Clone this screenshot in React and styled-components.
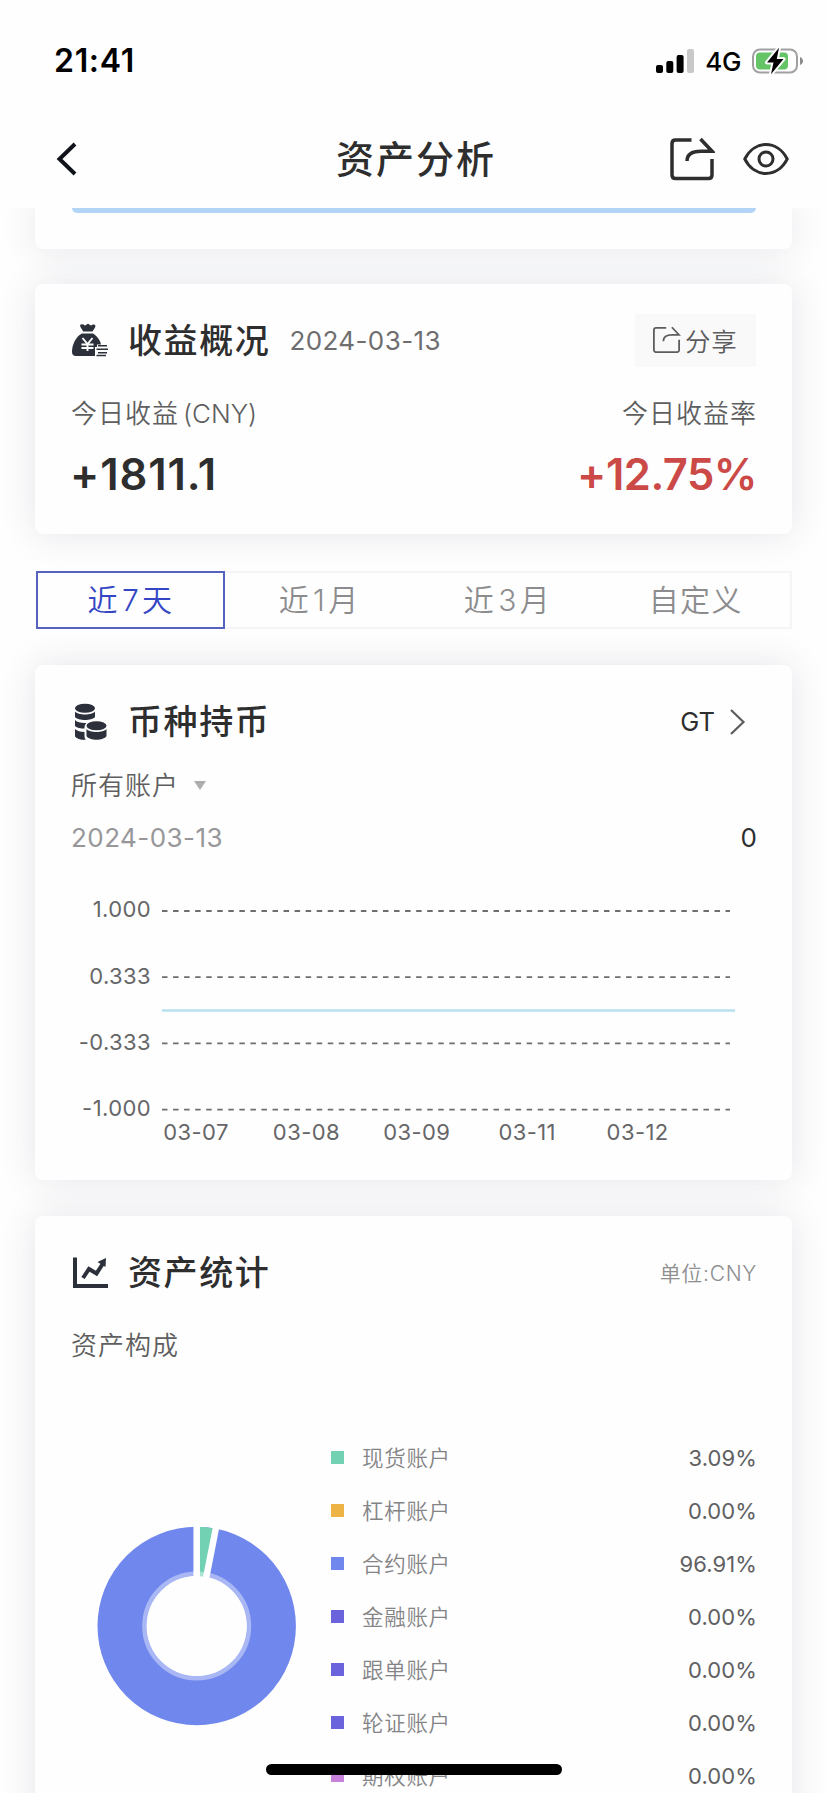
import React from "react";
import styled, { createGlobalStyle } from "styled-components";

const GlobalStyle = createGlobalStyle`
  * {
    box-sizing: border-box;
  }
  body {
    margin: 0;
    background: #fefefe;
    font-family: Inter, "Noto Sans CJK SC", sans-serif;
    color: #2e2e2f;
  }
  svg {
    display: block;
    flex-shrink: 0;
  }
`;

const Screen = styled.div`
  position: relative;
  width: 828px;
  height: 1793px;
  display: flex;
  flex-direction: column;
  overflow: hidden;
`;
const Header = styled.header`
  height: 208px;
  flex-shrink: 0;
  background: #fefefe;
`;
const StatusBar = styled.div`
  height: 122px;
  padding: 0 25px 0 54px;
  display: flex;
  align-items: center;
`;
const Clock = styled.span`
  flex: 1;
  margin-bottom: 2px;
  font-size: 32px;
  font-weight: 600;
  letter-spacing: 0.7px;
  color: #000;
`;
const Network = styled.span`
  margin: 1px 11px 0;
  font-size: 26px;
  font-weight: 500;
  letter-spacing: -0.4px;
  color: #000;
`;
const NavBar = styled.nav`
  height: 74px;
  padding: 0 39px 0 56px;
  display: grid;
  grid-template-columns: 103px 1fr 120px;
  align-items: center;
`;
const NavTitle = styled.h1`
  margin: 0;
  padding-left: 4px;
  text-align: center;
  font-size: 38px;
  line-height: 54px;
  font-weight: 500;
  letter-spacing: 2px;
`;
const NavActions = styled.div`
  display: flex;
  justify-content: flex-end;
  align-items: center;
  gap: 28px;
`;
const Content = styled.main`
  flex: 1;
  min-height: 0;
  overflow: hidden;
  padding: 0 36px 0 35px;
`;
const Card = styled.section`
  height: ${(props) => props.$height}px;
  padding: 30px 36px 0 37px;
  margin-bottom: ${(props) => props.$gap || 0}px;
  background: #fefefe;
  border-radius: 8px;
  box-shadow: 0 0 36px rgba(40, 52, 84, 0.12);
`;
const TopCard = styled(Card)`
  padding-top: 0;
  border-radius: 0 0 8px 8px;
`;
const BannerEdge = styled.div`
  height: 5px;
  background: #b2d4f7;
  border-radius: 0 0 5px 5px;
`;
const Row = styled.div`
  display: flex;
  align-items: center;
  justify-content: space-between;
  height: ${(props) => props.$height || 36}px;
  margin-top: ${(props) => props.$top || 0}px;
`;
const TitleGroup = styled.div`
  display: flex;
  align-items: center;
`;
const CardTitle = styled.h2`
  margin: 0 0 0 19px;
  font-size: 34px;
  line-height: 50px;
  font-weight: 500;
  letter-spacing: 1.6px;
`;
const TitleDate = styled.span`
  margin-left: 19px;
  font-size: 26px;
  letter-spacing: 0.4px;
  color: #6e6e70;
`;
const ShareButton = styled.button`
  width: 121px;
  height: 53px;
  padding: 0 0 2px 17px;
  display: flex;
  align-items: center;
  gap: 4px;
  border: 0;
  background: #f9f9fa;
  font: inherit;
  font-size: 25.5px;
  font-weight: 350;
  letter-spacing: 0.8px;
  color: #5c5c5e;
`;
const Label = styled.span`
  font-size: 26px;
  line-height: 36px;
  font-weight: 350;
  letter-spacing: 1px;
  margin: 1px -1px 0;
  color: #5e5e60;
`;
const Latin = styled.span`
  margin-left: 4px;
  letter-spacing: 0;
`;
const Amount = styled.strong`
  margin: 0 -1px 0 -2px;
  font-size: 43.5px;
  line-height: 52px;
  font-weight: 600;
  letter-spacing: ${(props) => (props.$up ? -0.5 : 0.9)}px;
  color: ${(props) => (props.$up ? "#cb4a47" : "#2e2e2f")};
`;
const Tabs = styled.div`
  height: 58px;
  margin: 0 0 36px 1px;
  display: grid;
  grid-template-columns: 187px repeat(3, 1fr);
  border: 2px solid #f5f5f7;
`;
const Tab = styled.button`
  margin: ${(props) => (props.$active ? "-2px 0 -2px -2px" : "0")};
  padding: 0 0 4px;
  border: ${(props) => (props.$active ? "2px solid #5663be" : "0")};
  background: transparent;
  font: inherit;
  font-size: 30px;
  font-weight: 350;
  letter-spacing: 1.4px;
  color: ${(props) => (props.$active ? "#3546c4" : "#8c8c8e")};
`;
const Count = styled.span`
  margin: 0 2px 0 3px;
`;
const CoinPicker = styled.div`
  display: flex;
  align-items: center;
  gap: 14px;
  padding-right: 10px;
  font-size: 25.5px;
`;
const AccountPicker = styled.div`
  display: flex;
  align-items: center;
  gap: 16px;
`;
const Triangle = styled.i`
  border: 6.5px solid transparent;
  border-top: 9px solid #adadaf;
  border-bottom: 0;
`;
const PointDate = styled.span`
  margin: -2px 0 0 -1px;
  font-size: 26px;
  letter-spacing: 0.45px;
  color: #97979a;
`;
const PointValue = styled.span`
  margin: -2px -1px 0 0;
  font-size: 26px;
`;
const ChartText = styled.text`
  font-size: 22px;
  letter-spacing: 0.4px;
  fill: #666668;
`;
const Unit = styled.span`
  margin: -2px -1px 0 0;
  font-size: 21px;
  font-weight: 350;
  letter-spacing: 0.7px;
  color: #8e8e90;
`;
const Composition = styled.div`
  display: flex;
  margin-top: 68px;
`;
const DonutBox = styled.div`
  width: 259px;
  padding: 94.5px 0 0 25px;
`;
const Legend = styled.ul`
  flex: 1;
  margin: 0;
  padding: 0;
  list-style: none;
`;
const LegendItem = styled.li`
  height: 53px;
  display: flex;
  align-items: center;
`;
const Swatch = styled.i`
  width: 13px;
  height: 13px;
  margin-right: 18px;
  background: ${(props) => props.$color};
`;
const LegendName = styled.span`
  flex: 1;
  margin-top: -2px;
  font-size: 21.5px;
  font-weight: 350;
  letter-spacing: 0.7px;
  color: #848486;
`;
const LegendValue = styled.span`
  font-size: 22px;
  letter-spacing: 0.1px;
  margin-right: -1px;
  color: #606062;
`;
const HomeIndicator = styled.div`
  position: absolute;
  left: 266px;
  bottom: 18px;
  width: 296px;
  height: 11px;
  border-radius: 6px;
  background: #000;
`;

const ranges = [
  ["近", "7", "天"],
  ["近", "1", "月"],
  ["近", "3", "月"],
  ["自定义"],
];
const yTicks = ["1.000", "0.333", "-0.333", "-1.000"];
const xTicks = ["03-07", "03-08", "03-09", "03-11", "03-12"];
const accounts = [
  { name: "现货账户", value: "3.09%", color: "#72d0b3" },
  { name: "杠杆账户", value: "0.00%", color: "#edb344" },
  { name: "合约账户", value: "96.91%", color: "#7087ed" },
  { name: "金融账户", value: "0.00%", color: "#6b63dc" },
  { name: "跟单账户", value: "0.00%", color: "#6b63dc" },
  { name: "轮证账户", value: "0.00%", color: "#6b63dc" },
  { name: "期权账户", value: "0.00%", color: "#c882dc" },
];

function SignalIcon() {
  return (
    <svg width="38" height="24" viewBox="0 0 38 24">
      <rect x="0" y="16" width="7" height="8" rx="2" />
      <rect x="10.3" y="12" width="7" height="12" rx="2" />
      <rect x="20.6" y="6" width="7" height="18" rx="2" />
      <rect x="31" y="0" width="7" height="24" rx="2" fill="#c8c8c8" />
    </svg>
  );
}

function BatteryIcon() {
  return (
    <svg width="51" height="28" viewBox="0 0 51 28">
      <rect x="1" y="2.5" width="44" height="23" rx="7" fill="none" stroke="#a0a0a2" strokeWidth="2" />
      <path d="M48 10c4 1.5 4 6.5 0 8z" fill="#8b8b8d" />
      <rect x="4" y="5.5" width="32" height="17" rx="4" fill="#65c466" />
      <path
        d="M27 0.8L15 15.5H21.5L19 27.2L31.5 12H24.8Z"
        stroke="#fefefe"
        strokeWidth="4"
        strokeLinejoin="round"
      />
      <path d="M27 0.8L15 15.5H21.5L19 27.2L31.5 12H24.8Z" />
    </svg>
  );
}

function BackIcon() {
  return (
    <svg width="22" height="34" viewBox="0 0 22 34" fill="none" stroke="#11131a" strokeWidth="4">
      <path d="M19 2L3.5 17L19 32" />
    </svg>
  );
}

function ShareIcon({ width, stroke }) {
  return (
    <svg
      width={width}
      height={(width * 44) / 46}
      viewBox="0 0 46 44"
      fill="none"
      stroke="currentColor"
      strokeWidth={stroke}
    >
      <path d="M22.5 3H6.5Q3 3 3 6.5V38Q3 41.5 6.5 41.5H39.5Q43 41.5 43 38V22" />
      <path d="M31.5 2L43 14.2H32C22.5 14.2 18 17.5 18 24" />
    </svg>
  );
}

function EyeIcon() {
  return (
    <svg width="46" height="32" viewBox="0 0 46 32" fill="none" stroke="#2e2e2f" strokeWidth="3">
      <path d="M1.8 16C11.5-3.3 34.5-3.3 44.2 16C34.5 35.3 11.5 35.3 1.8 16Z" />
      <circle cx="23" cy="16" r="7" />
    </svg>
  );
}

function MoneyBagIcon() {
  return (
    <svg width="37" height="36" viewBox="0 0 37 36" fill="#2b303b">
      <path d="M8 2.5C9.5.5 11.5 1.5 12.5 2.2C14 3 15 .8 16 .8C17 .8 18 3 19.500 2.2C21 1.2 23 1.5 23.5 3C22.8 5.5 21.5 6.5 20.5 8.5H11C10.5 6.5 8.5 5 8 2.5Z" />
      <path d="M10 10.5H21C25 13 28.5 17.5 29 21.5H25V24H23V33H4C1.5 33 0 31.5 0 29C0 21.5 4 13.5 10 10.5Z" />
      <path
        d="M10.5 15L15.5 21L20.5 15M15.5 21V28M9.5 21.5H21.5M9.5 25H21.5"
        fill="none"
        stroke="#fefefe"
        strokeWidth="1.9"
      />
      <path d="M26 22.7H35M24.5 26.2H36M26 29.7H35M24.5 32.5H34" fill="none" stroke="#2b303b" strokeWidth="1.6" />
    </svg>
  );
}

function CoinsIcon() {
  return (
    <svg width="37" height="38" viewBox="0 0 37 38" fill="#2b303b">
      <ellipse cx="13" cy="5.3" rx="10" ry="4.5" />
      <path d="M3 8.5C6 12.5 20 12.5 23 8.5V14C20 18 6 18 3 14Z" />
      <path d="M3 17C5.5 19.5 9 20.2 14.5 20C13 21.5 12.5 22.5 12.5 25.5C8.5 25.5 5 25 3 23Z" />
      <path d="M3 26C5 28 8.5 29 12.5 29V33C12.5 35 13 36 14 36.8C9 37 5 36 3 33.5Z" />
      <ellipse cx="24.5" cy="22.8" rx="10" ry="4.5" />
      <path d="M14.5 26C17.5 30 31.5 30 34.5 26V33C31.5 38 17.5 38 14.5 33Z" />
    </svg>
  );
}

function TrendIcon() {
  return (
    <svg width="37" height="34" viewBox="0 0 37 34" fill="none" stroke="#2b303b">
      <path d="M3 1.5V30H36" strokeWidth="4" />
      <path d="M11 22L17 13L24.5 17.5L31 7.5" strokeWidth="4" />
      <path d="M25.5 6L34 2L33.5 11Z" fill="#2b303b" stroke="none" />
    </svg>
  );
}

function HoldingsChart() {
  return (
    <svg width="684" height="300" viewBox="72 856 684 300">
      {yTicks.map((tick, i) => (
        <g key={tick}>
          <ChartText x="151" y={917.3 + i * 66.2} textAnchor="end">
            {tick}
          </ChartText>
          <line
            x1="162"
            x2="730"
            y1={911 + i * 66.2}
            y2={911 + i * 66.2}
            stroke="#6e6e70"
            strokeWidth="1.8"
            strokeDasharray="5.5 5.55"
          />
        </g>
      ))}
      <line x1="162" x2="735" y1="1010.5" y2="1010.5" stroke="#b9dff1" strokeWidth="2.5" />
      {xTicks.map((tick, i) => (
        <ChartText key={tick} x={196 + i * 110.4} y="1140.3" textAnchor="middle">
          {tick}
        </ChartText>
      ))}
    </svg>
  );
}

function Donut() {
  return (
    <svg width="200" height="200" viewBox="-99.7 -100 200 200">
      <circle r="74.6" fill="none" stroke="#7087ed" strokeWidth="49.2" />
      <path d="M0 0V-99.2A99.2 99.2 0 0 1 19.2 -97.3Z" fill="#72d0b3" />
      <circle r="52.25" fill="none" stroke="#fefefe" strokeOpacity="0.4" strokeWidth="4.5" />
      <circle r="50" fill="#fefefe" />
      <path d="M0 0V-104M0 0L20 -102" stroke="#fefefe" strokeWidth="6.5" />
    </svg>
  );
}

export default function App() {
  return (
    <>
      <GlobalStyle />
      <Screen>
        <Header>
          <StatusBar>
            <Clock>21:41</Clock>
            <SignalIcon />
            <Network>4G</Network>
            <BatteryIcon />
          </StatusBar>
          <NavBar>
            <BackIcon />
            <NavTitle>资产分析</NavTitle>
            <NavActions>
              <ShareIcon width={46} stroke={3.5} />
              <EyeIcon />
            </NavActions>
          </NavBar>
        </Header>
        <Content>
          <TopCard $height={41} $gap={35}>
            <BannerEdge />
          </TopCard>

          <Card $height={250} $gap={37}>
            <Row $height={53}>
              <TitleGroup>
                <MoneyBagIcon />
                <CardTitle>收益概况</CardTitle>
                <TitleDate>2024-03-13</TitleDate>
              </TitleGroup>
              <ShareButton>
                <ShareIcon width={29} stroke={2.8} />
                分享
              </ShareButton>
            </Row>
            <Row $top={28}>
              <Label>
                今日收益<Latin>(CNY)</Latin>
              </Label>
              <Label>今日收益率</Label>
            </Row>
            <Row $height={52} $top={17}>
              <Amount>+1811.1</Amount>
              <Amount $up>+12.75%</Amount>
            </Row>
          </Card>

          <Tabs>
            {ranges.map(([prefix, count, unit], i) => (
              <Tab key={i} $active={i === 0}>
                {prefix}
                {count && <Count>{count}</Count>}
                {unit}
              </Tab>
            ))}
          </Tabs>

          <Card $height={515} $gap={36}>
            <Row $height={53}>
              <TitleGroup>
                <CoinsIcon />
                <CardTitle>币种持币</CardTitle>
              </TitleGroup>
              <CoinPicker>
                GT
                <svg width="17" height="28" viewBox="0 0 17 28" fill="none" stroke="#5c5c5e" strokeWidth="2.2">
                  <path d="M2 2L14.5 14L2 26" />
                </svg>
              </CoinPicker>
            </Row>
            <Row $top={19}>
              <AccountPicker>
                <Label>所有账户</Label>
                <Triangle />
              </AccountPicker>
            </Row>
            <Row $top={17}>
              <PointDate>2024-03-13</PointDate>
              <PointValue>0</PointValue>
            </Row>
            <HoldingsChart />
          </Card>

          <Card $height={640}>
            <Row $height={53}>
              <TitleGroup>
                <TrendIcon />
                <CardTitle>资产统计</CardTitle>
              </TitleGroup>
              <Unit>单位:CNY</Unit>
            </Row>
            <Row $top={28}>
              <Label>资产构成</Label>
            </Row>
            <Composition>
              <DonutBox>
                <Donut />
              </DonutBox>
              <Legend>
                {accounts.map((account) => (
                  <LegendItem key={account.name}>
                    <Swatch $color={account.color} />
                    <LegendName>{account.name}</LegendName>
                    <LegendValue>{account.value}</LegendValue>
                  </LegendItem>
                ))}
              </Legend>
            </Composition>
          </Card>
        </Content>
        <HomeIndicator />
      </Screen>
    </>
  );
}
